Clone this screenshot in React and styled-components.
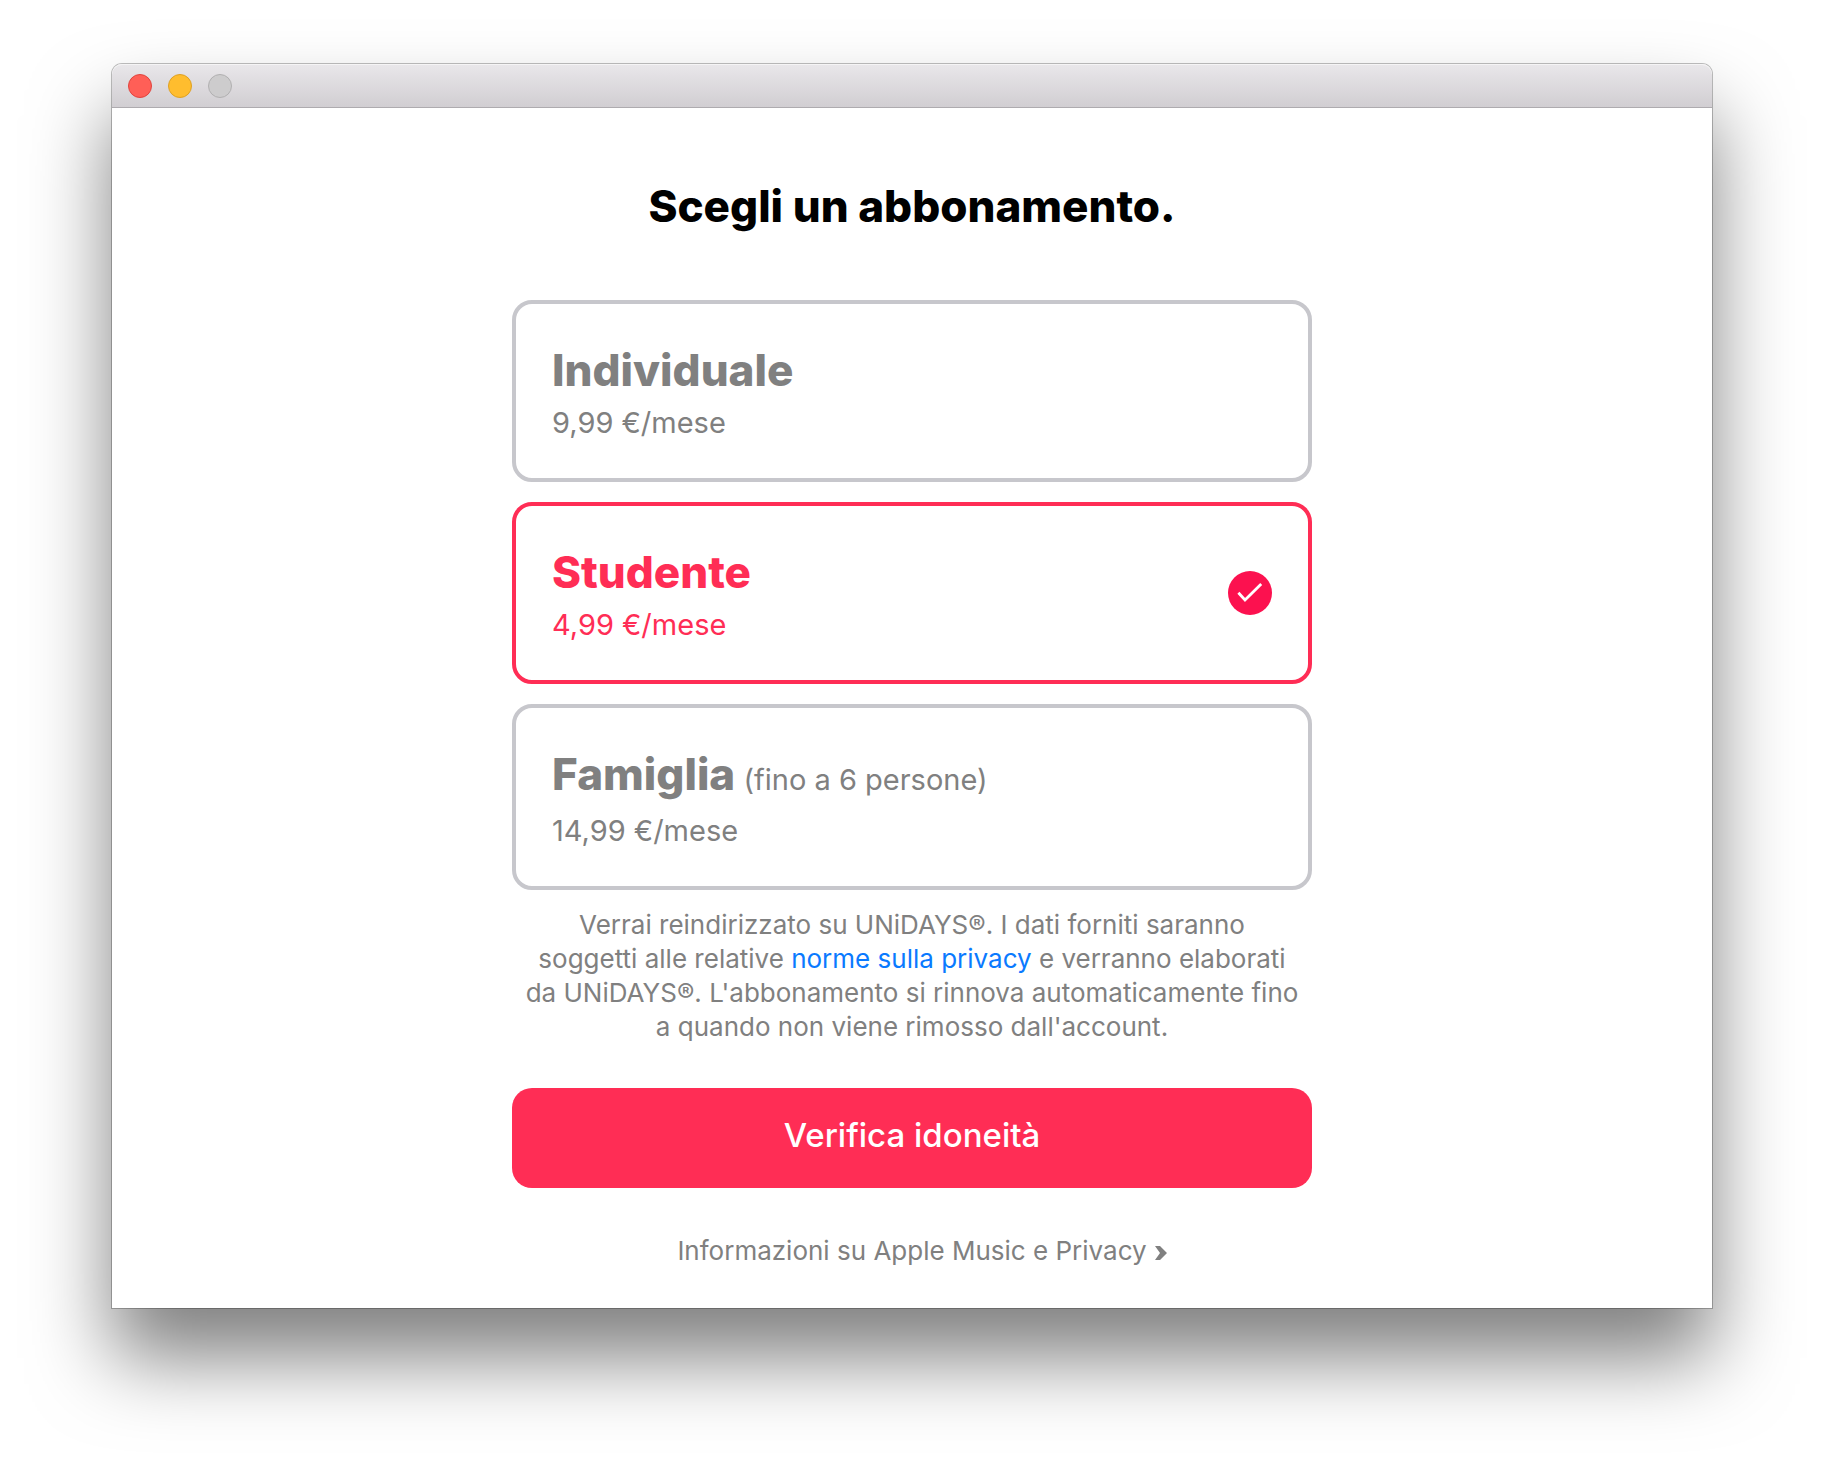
import { useState } from 'react';
import styled, { createGlobalStyle } from 'styled-components';

const plans = [
  { id: 'individual', name: 'Individuale', price: '9,99 €/mese' },
  { id: 'student', name: 'Studente', price: '4,99 €/mese' },
  { id: 'family', name: 'Famiglia', hint: '(fino a 6 persone)', price: '14,99 €/mese' },
];

export default function App() {
  const [selected, setSelected] = useState('student');

  function handleSubmit(e) {
    e.preventDefault();
  }

  return (
    <>
      <GlobalStyle />
      <Desktop>
        <Window>
          <TitleBar>
            <WindowButton type="button" aria-label="Chiudi" $color="#ff5f57" $border="#e0443e" />
            <WindowButton type="button" aria-label="Riduci" $color="#ffbd2e" $border="#dea123" />
            <WindowButton type="button" aria-label="Ingrandisci" disabled $color="#cdcccd" $border="#b1b0b1" />
          </TitleBar>
          <Content onSubmit={handleSubmit}>
            <Heading id="plans-heading">Scegli un abbonamento.</Heading>
            <PlanList role="radiogroup" aria-labelledby="plans-heading">
              {plans.map((plan) => (
                <Plan
                  key={plan.id}
                  plan={plan}
                  checked={selected === plan.id}
                  onSelect={() => setSelected(plan.id)}
                />
              ))}
            </PlanList>
            <Note>
              Verrai reindirizzato su UNiDAYS®. I dati forniti saranno
              <br />
              soggetti alle relative <PrivacyLink href="#privacy">norme sulla privacy</PrivacyLink> e verranno
              elaborati da UNiDAYS®. L'abbonamento si rinnova automaticamente fino a quando non viene rimosso
              dall'account.
            </Note>
            <SubmitButton type="submit">Verifica idoneità</SubmitButton>
            <InfoLink href="#info">
              Informazioni su Apple Music e Privacy
              <svg width="12" height="14" viewBox="0 0 12 14" aria-hidden="true">
                <path d="M0 0h5l7 7-7 7H0l5-7z" fill="currentColor" />
              </svg>
            </InfoLink>
          </Content>
        </Window>
      </Desktop>
    </>
  );
}

function Plan({ plan, checked, onSelect }) {
  return (
    <PlanCard $checked={checked}>
      <PlanText>
        <PlanName>
          {plan.name}
          {plan.hint && <PlanHint> {plan.hint}</PlanHint>}
        </PlanName>
        <PlanPrice>{plan.price}</PlanPrice>
      </PlanText>
      <Check>
        <Radio type="radio" name="plan" value={plan.id} checked={checked} onChange={onSelect} />
        {checked && (
          <svg width="44" height="44" viewBox="0 0 44 44" aria-hidden="true">
            <path d="M10.4 21.8 17 29 33.2 12.9" fill="none" stroke="#fff" strokeWidth="2.8" />
          </svg>
        )}
      </Check>
    </PlanCard>
  );
}

const GlobalStyle = createGlobalStyle`
  * {
    box-sizing: border-box;
  }

  body {
    margin: 0;
    background: #ffffff;
    font-family: 'Inter', 'Liberation Sans', sans-serif;
  }
`;

const Desktop = styled.div`
  padding: 64px 112px 160px;
  overflow: hidden;
`;

const Window = styled.main`
  background: #ffffff;
  border-radius: 10px 10px 0 0;
  box-shadow: 0 0 0 1px rgba(0, 0, 0, 0.25), 0 50px 80px rgba(0, 0, 0, 0.5);
`;

const TitleBar = styled.div`
  display: flex;
  gap: 16px;
  padding: 10px 16px 9px;
  background: linear-gradient(#e9e7ea, #d1ced2);
  border-bottom: 1px solid #aeabaf;
  border-radius: 10px 10px 0 0;
  box-shadow: inset 0 1px 0 #f5f4f5;
`;

const WindowButton = styled.button`
  width: 24px;
  height: 24px;
  padding: 0;
  border: 1px solid ${(props) => props.$border};
  border-radius: 50%;
  background: ${(props) => props.$color};
`;

const Content = styled.form`
  display: flex;
  flex-direction: column;
  align-items: center;
  width: 100%;
  max-width: 800px;
  margin: 0 auto;
  padding: 68px 0 40px;
`;

const Heading = styled.h1`
  margin: 0 0 64px;
  font-weight: 800;
  font-size: 44px;
  line-height: 60px;
  text-align: center;
  color: #000000;
`;

const PlanList = styled.div`
  display: flex;
  flex-direction: column;
  gap: 20px;
  width: 100%;
`;

const PlanCard = styled.label`
  display: flex;
  justify-content: space-between;
  align-items: center;
  padding: 34px 36px;
  border: 4px solid ${(props) => (props.$checked ? '#ff2d55' : '#c7c7cc')};
  border-radius: 20px;
  color: ${(props) => (props.$checked ? '#ff2d55' : '#808080')};
  cursor: pointer;
`;

const PlanText = styled.div`
  padding-top: 2px;
`;

const PlanName = styled.div`
  font-weight: 800;
  font-size: 44px;
  line-height: 60px;
`;

const PlanHint = styled.span`
  font-weight: 400;
  font-size: 29px;
  line-height: 56px;
`;

const PlanPrice = styled.div`
  margin-top: 2px;
  font-size: 29px;
  line-height: 42px;
`;

const Check = styled.span`
  display: grid;

  > * {
    grid-area: 1 / 1;
  }
`;

const Radio = styled.input`
  appearance: none;
  width: 44px;
  height: 44px;
  margin: 0;
  border-radius: 50%;

  &:checked {
    background: #fc114f;
  }
`;

const Note = styled.p`
  margin: 18px 0 44px;
  padding: 0 12px;
  font-size: 26px;
  line-height: 34px;
  text-align: center;
  color: #808080;
`;

const PrivacyLink = styled.a`
  color: #0a7aff;
  text-decoration: none;
`;

const SubmitButton = styled.button`
  width: 100%;
  height: 100px;
  padding: 0 0 6px;
  border: none;
  border-radius: 20px;
  background: #ff2d55;
  font-family: inherit;
  font-weight: 500;
  font-size: 33px;
  color: #ffffff;
  cursor: pointer;
`;

const InfoLink = styled.a`
  display: flex;
  align-items: center;
  gap: 8px;
  margin-top: 46px;
  padding-left: 20px;
  font-size: 26px;
  line-height: 34px;
  color: #808080;
  text-decoration: none;

  svg {
    margin-top: 4px;
  }
`;
